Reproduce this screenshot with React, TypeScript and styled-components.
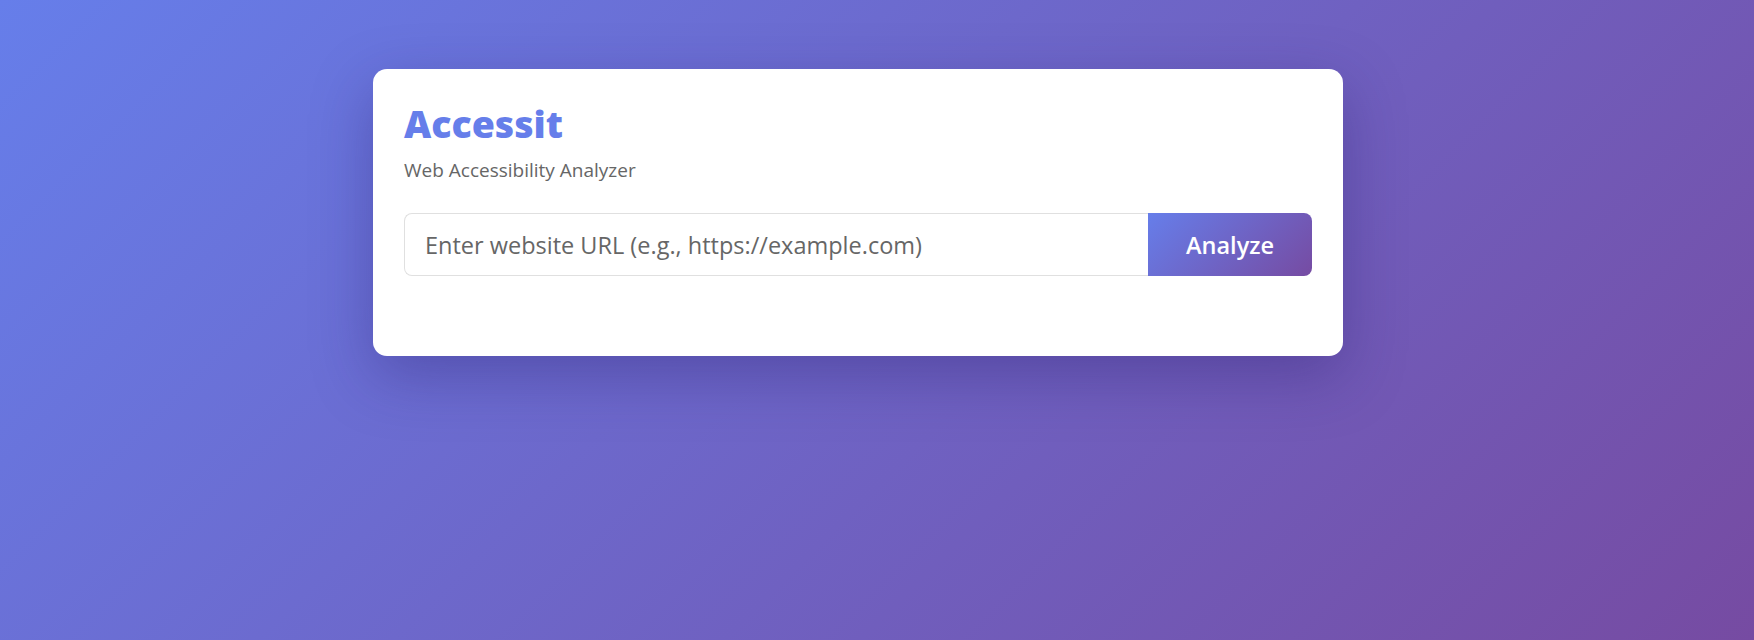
import React, { useState } from 'react';
import styled, { createGlobalStyle } from 'styled-components';

const GlobalStyle = createGlobalStyle`
  * {
    box-sizing: border-box;
  }
  html, body {
    margin: 0;
    padding: 0;
  }
  body {
    font-family: 'Open Sans', 'Noto Sans', sans-serif;
    min-height: 640px;
    background: linear-gradient(135deg, #667eea 0%, #764ba2 100%);
  }
`;

const Page = styled.div`
  min-height: 640px;
  padding: 69px 38px 0 0;
`;

const Card = styled.div`
  max-width: 970px;
  margin: 0 auto;
  background: #fff;
  border-radius: 14px;
  padding: 31px 31px 80px;
  box-shadow: 0 20px 60px rgba(40, 30, 110, 0.35);
`;

const Title = styled.h1`
  margin: 0;
  font-weight: 800;
  font-size: 37.5px;
  line-height: 48px;
  color: #667eea;
`;

const Subtitle = styled.p`
  margin: 9px 0 0;
  font-size: 19px;
  line-height: 26px;
  color: #666;
`;

const SearchRow = styled.form`
  display: flex;
  margin-top: 30px;
  height: 63px;
`;

const UrlInput = styled.input`
  flex: 1;
  min-width: 0;
  height: 100%;
  padding: 0 20px;
  border: 1px solid #e0e0e0;
  border-right: none;
  border-radius: 8px 0 0 8px;
  font-family: inherit;
  font-size: 23.5px;
  color: #333;
  outline: none;

  &::placeholder {
    color: #666;
  }
`;

const AnalyzeButton = styled.button`
  width: 164px;
  height: 100%;
  border: none;
  border-radius: 0 8px 8px 0;
  background: linear-gradient(135deg, #667eea 0%, #764ba2 100%);
  color: #fff;
  font-family: inherit;
  font-size: 23.5px;
  font-weight: 600;
  cursor: pointer;
`;

export default function App() {
  const [url, setUrl] = useState('');

  return (
    <Page>
      <GlobalStyle />
      <Card>
        <Title>Accessit</Title>
        <Subtitle>Web Accessibility Analyzer</Subtitle>
        <SearchRow
          onSubmit={(e) => {
            e.preventDefault();
          }}
        >
          <UrlInput
            type="text"
            value={url}
            onChange={(e) => setUrl(e.target.value)}
            placeholder="Enter website URL (e.g., https://example.com)"
          />
          <AnalyzeButton type="submit">Analyze</AnalyzeButton>
        </SearchRow>
      </Card>
    </Page>
  );
}
